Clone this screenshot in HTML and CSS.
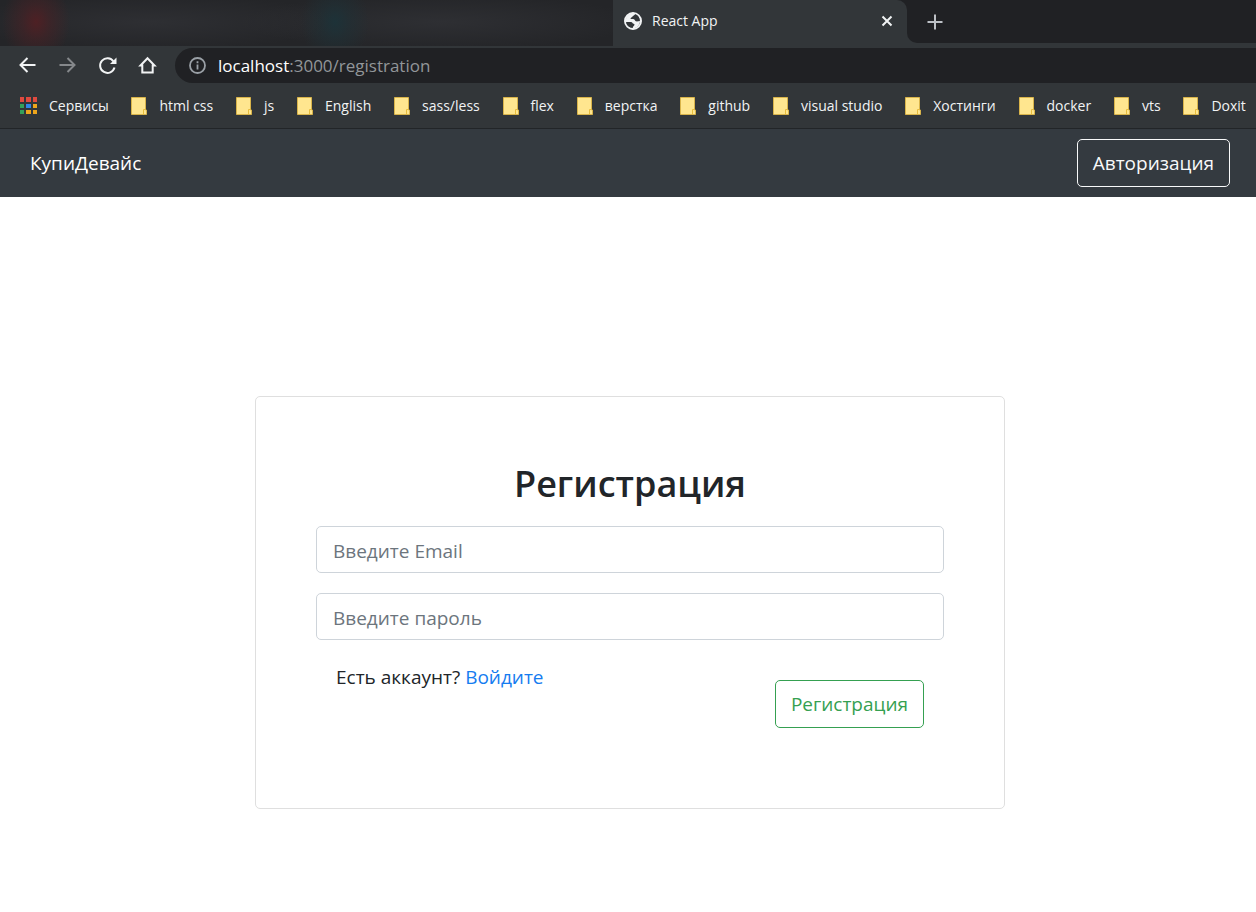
FILE: index.html
```html
<!DOCTYPE html>
<html lang="ru">
<head>
<meta charset="utf-8">
<meta name="viewport" content="width=device-width, initial-scale=1">
<title>React App</title>
<link rel="stylesheet" href="styles.css">
</head>
<body>
<svg class="sprite" aria-hidden="true">
  <symbol id="folder" viewBox="0 0 16 18">
    <path d="M.5.5h14v12.500h1v4.500H.5z" fill="#ffe68f" stroke="#d9b44a"/>
    <path d="M12.500 17v-4.500h2" fill="none" stroke="#e8bd3c"/>
  </symbol>
</svg>
<header class="browser">
  <div class="tabs">
    <div class="tabs-hidden"></div>
    <div class="tab-slot">
      <div class="tab">
        <svg class="globe" width="18" height="18" viewBox="0 0 18 18" aria-hidden="true">
          <circle cx="9" cy="9" r="8" fill="#323639" stroke="#f1f3f4" stroke-width="2"/>
          <path d="M2 7C2.500 4 5 1.500 9 1.500c1 0 1.500.2 2 .5C10.500 3.500 9 3.500 8.500 4.500 8.200 5.500 6.500 5.500 6.500 6.500c0 .8 2.500.3 3.500.8 1 .4.800 1.700 1.800 2 1.400.4 2.700-.3 4.200-.3-.2 4-3 7.300-7 7.300-.5-1 .2-2 1-2.600.8-.7.600-1.700-.4-1.900C8.500 11.500 8.300 10.200 7 10H2z" fill="#f1f3f4"/>
          <path d="M2.200 10.300c1.800-.2 3 .2 4 .9.900.700 2.300.6 2.300 1.700 0 1-1 1.700-.8 2.900-2.800-.4-5-2.700-5.500-5.500zM11.500 2.300c-.5 1.700-2.300 1.600-2.500 2.700-.1 1 .800 1 1.600 1.300.9.400.9 1.700 2 1.800 1 .1 2-.3 3-.3-.4-2.600-2-4.600-4.100-5.500z" fill="#323639"/>
        </svg>
        <span class="tab-title">React App</span>
        <button class="icon-button" type="button" aria-label="Закрыть вкладку">
          <svg width="12" height="12" viewBox="0 0 12 12"><path d="M1.500 1.500l9 9m0-9l-9 9" stroke="#f1f3f4" stroke-width="2"/></svg>
        </button>
      </div>
    </div>
    <div class="tabs-rest">
      <button class="icon-button" type="button" aria-label="Новая вкладка">
        <svg width="16" height="16" viewBox="0 0 16 16"><path d="M8 .5v15M.5 8h15" stroke="#bdc1c6" stroke-width="2"/></svg>
      </button>
    </div>
  </div>
  <div class="toolbar">
    <button class="icon-button" type="button" aria-label="Назад">
      <svg width="20" height="20" viewBox="0 0 20 20"><path d="M18.500 9H3.500m7-7L3.500 9l7 7" fill="none" stroke="#f1f3f4" stroke-width="2"/></svg>
    </button>
    <button class="icon-button" type="button" aria-label="Вперёд">
      <svg width="20" height="20" viewBox="0 0 20 20"><path d="M2.500 9h15M10.500 2l7 7-7 7" fill="none" stroke="#85888b" stroke-width="2"/></svg>
    </button>
    <button class="icon-button" type="button" aria-label="Обновить">
      <svg width="20" height="20" viewBox="0 0 20 20"><path d="M16.500 5.500A7.300 7.300 0 1 0 17.500 11.500" fill="none" stroke="#f1f3f4" stroke-width="2"/><path d="M19.500 1.500V8H13z" fill="#f1f3f4"/></svg>
    </button>
    <button class="icon-button" type="button" aria-label="Домой">
      <svg width="20" height="20" viewBox="0 0 20 20"><path d="M3.500 9.500l7-7.200 7 7.200h-1.800v7H5.300v-7z" fill="none" stroke="#f1f3f4" stroke-width="2"/></svg>
    </button>
    <div class="address">
      <svg width="17" height="17" viewBox="0 0 17 17" aria-hidden="true"><circle cx="8.500" cy="8.500" r="7.500" fill="none" stroke="#9aa0a6" stroke-width="1.800"/><path d="M8.500 7.500v5M8.500 4.300v1.900" stroke="#9aa0a6" stroke-width="1.800"/></svg>
      <span class="url"><span class="url-host">localhost</span>:3000/registration</span>
    </div>
  </div>
  <nav class="bookmarks" aria-label="Закладки">
    <a class="bookmark" href="#"><svg width="17" height="18" viewBox="0 0 17 18" aria-hidden="true"><path d="M0 0h4v5H0zM6 0h5v5H6zM13 0h4v5h-4z" fill="#e04a3f"/><path d="M0 7h4v4H0zM0 13h4v4H0z" fill="#34a05a"/><path d="M6 7h5v4H6z" fill="#2f86e8"/><path d="M13 7h4v4h-4zM6 13h5v4H6zM13 13h4v4h-4z" fill="#eda51c"/></svg>Сервисы</a>
    <a class="bookmark" href="#"><svg width="16" height="18" aria-hidden="true"><use href="#folder"/></svg>html css</a>
    <a class="bookmark" href="#"><svg width="16" height="18" aria-hidden="true"><use href="#folder"/></svg>js</a>
    <a class="bookmark" href="#"><svg width="16" height="18" aria-hidden="true"><use href="#folder"/></svg>English</a>
    <a class="bookmark" href="#"><svg width="16" height="18" aria-hidden="true"><use href="#folder"/></svg>sass/less</a>
    <a class="bookmark" href="#"><svg width="16" height="18" aria-hidden="true"><use href="#folder"/></svg>flex</a>
    <a class="bookmark" href="#"><svg width="16" height="18" aria-hidden="true"><use href="#folder"/></svg>верстка</a>
    <a class="bookmark" href="#"><svg width="16" height="18" aria-hidden="true"><use href="#folder"/></svg>github</a>
    <a class="bookmark" href="#"><svg width="16" height="18" aria-hidden="true"><use href="#folder"/></svg>visual studio</a>
    <a class="bookmark" href="#"><svg width="16" height="18" aria-hidden="true"><use href="#folder"/></svg>Хостинги</a>
    <a class="bookmark" href="#"><svg width="16" height="18" aria-hidden="true"><use href="#folder"/></svg>docker</a>
    <a class="bookmark" href="#"><svg width="16" height="18" aria-hidden="true"><use href="#folder"/></svg>vts</a>
    <a class="bookmark" href="#"><svg width="16" height="18" aria-hidden="true"><use href="#folder"/></svg>Doxit</a>
  </nav>
</header>
<nav class="navbar">
  <a class="brand" href="#">КупиДевайс</a>
  <button class="btn btn-light" type="button">Авторизация</button>
</nav>
<main class="page">
  <section class="card">
    <h1 class="title">Регистрация</h1>
    <form class="form">
      <input class="field" type="email" placeholder="Введите Email" aria-label="Введите Email">
      <input class="field" type="password" placeholder="Введите пароль" aria-label="Введите пароль">
      <div class="form-footer">
        <p class="hint">Есть аккаунт? <a class="link" href="#">Войдите</a></p>
        <button class="btn btn-success" type="button">Регистрация</button>
      </div>
    </form>
  </section>
</main>
</body>
</html>
```
FILE: styles.css
```css
* {
  box-sizing: border-box;
}

body {
  margin: 0;
  background: #fff;
  color: #212529;
  font: 19px/30px "Open Sans", "Noto Sans", sans-serif;
}

a {
  text-decoration: none;
}

.sprite {
  display: none;
}

.browser {
  background: #323639;
  border-bottom: 1px solid #222528;
  color: #f1f3f4;
  font-size: 14px;
  line-height: 20px;
}

.icon-button {
  display: flex;
  padding: 0;
  border: 0;
  background: none;
}

.tabs {
  display: grid;
  grid-template-columns: 613fr 294fr 349fr;
  height: 46px;
}

.tabs-hidden {
  background:
    radial-gradient(ellipse 34px 44px at 36px 22px, #4e2024, #4e202480 40%, #4e202400),
    radial-gradient(ellipse 34px 44px at 335px 22px, #1d3238, #1d323880 40%, #1d323800),
    radial-gradient(ellipse 190px 28px at 150px 22px, #2e2f33, #2e2f3300),
    radial-gradient(ellipse 200px 28px at 440px 22px, #2e2f33, #2e2f3300),
    #242528;
}

.tab-slot {
  display: flex;
  background: linear-gradient(#202124 50%, #323639 50%);
}

.tab {
  flex: 1;
  display: flex;
  align-items: center;
  gap: 10px;
  padding: 0 14px 4px 11px;
  border-radius: 0 10px 0 0;
  background: #323639;
}

.tab-title {
  flex: 1;
}

.tabs-rest {
  display: flex;
  align-items: center;
  margin-bottom: 3px;
  padding-left: 20px;
  border-radius: 0 0 0 10px;
  background: #202124;
}

.toolbar {
  display: flex;
  align-items: center;
  gap: 20px;
  padding: 2px 0 0 17px;
}

.address {
  flex: 1;
  display: flex;
  align-items: center;
  gap: 12px;
  height: 35px;
  margin-left: -2px;
  padding-left: 14px;
  border-radius: 18px 0 0 18px;
  background: #202124;
}

.url {
  color: #929699;
  font-size: 17px;
}

.url-host {
  color: #fff;
}

.bookmarks {
  display: flex;
  justify-content: space-between;
  align-items: center;
  height: 45px;
  padding: 0 10px 0 20px;
}

.bookmark {
  display: flex;
  align-items: center;
  gap: 12px;
  color: inherit;
  white-space: nowrap;
}

.navbar {
  display: flex;
  justify-content: space-between;
  align-items: center;
  padding: 10px 26px 10px 30px;
  background: #343a40;
}

.brand {
  color: #fff;
}

.btn {
  height: 48px;
  padding: 0 15px;
  border: 1px solid;
  border-radius: 5px;
  background: none;
  font: inherit;
}

.btn-light {
  color: #f8f9fa;
}

.btn-success {
  margin-top: 20px;
  color: #35a051;
}

.page {
  padding: 199px 0 100px 4px;
}

.card {
  max-width: 750px;
  margin: 0 auto;
  padding: 60px;
  border: 1px solid #dfdfdf;
  border-radius: 5px;
}

.title {
  margin: 0;
  font-size: 36px;
  font-weight: 600;
  line-height: 54px;
  text-align: center;
}

.form {
  display: flex;
  flex-direction: column;
  gap: 20px;
  margin-top: 15px;
}

.field {
  width: 100%;
  height: 47px;
  padding: 2px 16px 0;
  border: 1px solid #ced4da;
  border-radius: 5px;
  background: #fff;
  color: #495057;
  font: inherit;
}

.field::placeholder {
  color: #6c757d;
  opacity: 1;
}

.form-footer {
  display: flex;
  justify-content: space-between;
  align-items: flex-start;
  padding: 0 20px 20px;
}

.hint {
  margin: 0;
  line-height: 34px;
}

.link {
  color: #157cf0;
}
```
